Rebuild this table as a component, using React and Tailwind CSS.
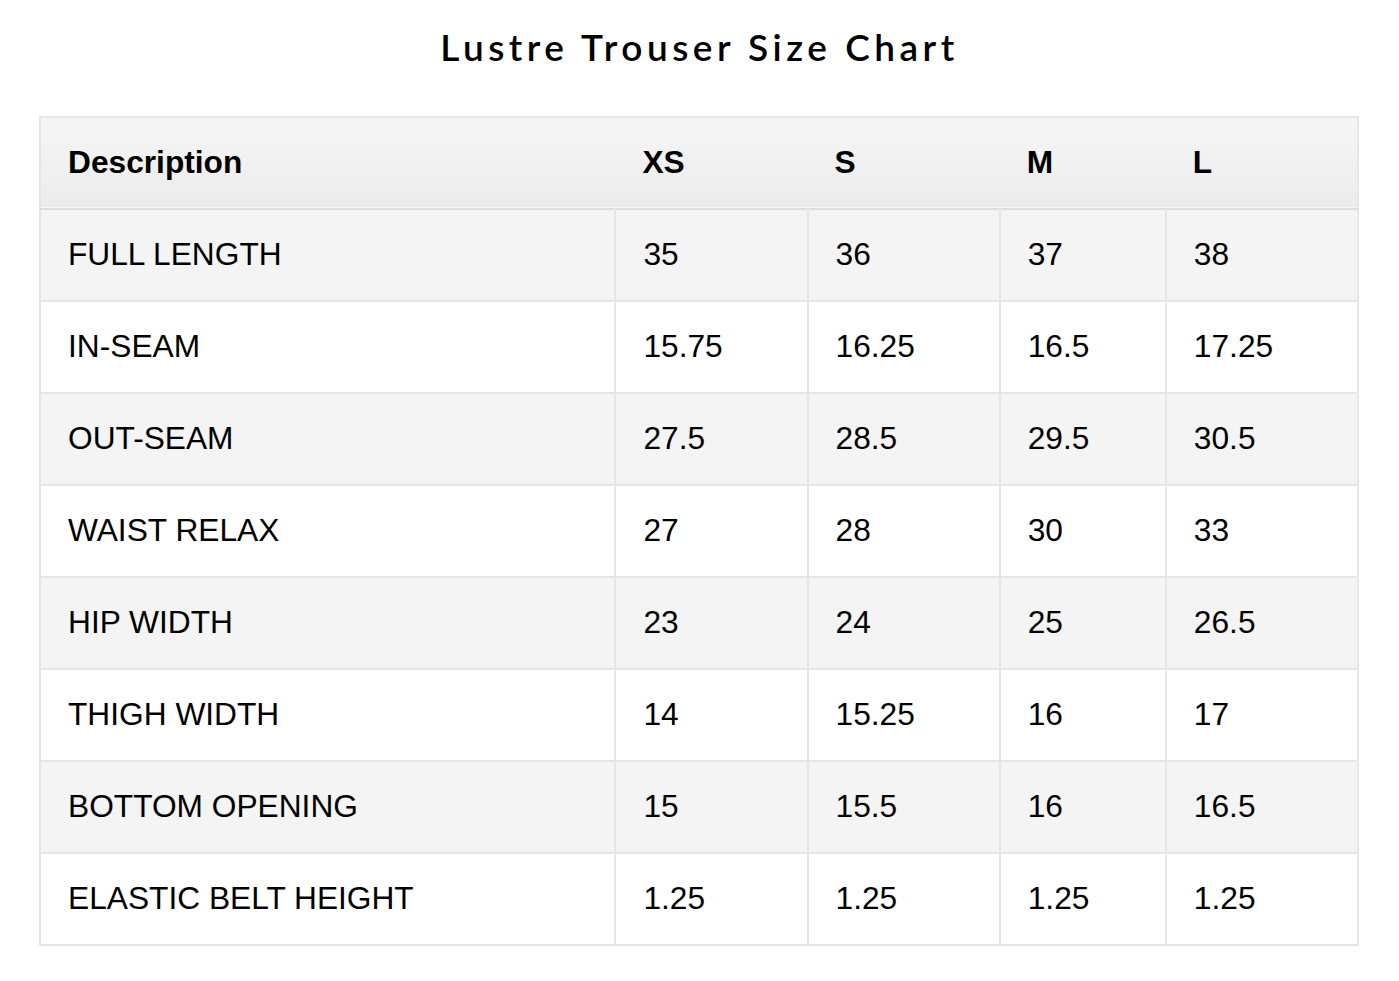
import React from "react";

const sizes = ["XS", "S", "M", "L"];

const rows = [
  { label: "FULL LENGTH", values: ["35", "36", "37", "38"] },
  { label: "IN-SEAM", values: ["15.75", "16.25", "16.5", "17.25"] },
  { label: "OUT-SEAM", values: ["27.5", "28.5", "29.5", "30.5"] },
  { label: "WAIST RELAX", values: ["27", "28", "30", "33"] },
  { label: "HIP WIDTH", values: ["23", "24", "25", "26.5"] },
  { label: "THIGH WIDTH", values: ["14", "15.25", "16", "17"] },
  { label: "BOTTOM OPENING", values: ["15", "15.5", "16", "16.5"] },
  { label: "ELASTIC BELT HEIGHT", values: ["1.25", "1.25", "1.25", "1.25"] },
];

const colWidths = ["w-[575px]", "w-[192px]", "w-[192px]", "w-[166px]", "w-[192px]"];

export default function App() {
  return (
    <div className="min-h-screen bg-white pt-[26px] font-['Liberation_Sans',Arial,sans-serif] text-black">
      {/* Title */}
      <h1 className="text-center font-['Lato',sans-serif] text-[37px] font-semibold leading-[42px] tracking-[4.5px]">
        Lustre Trouser Size Chart
      </h1>

      {/* Table */}
      <div className="mt-[48px] ml-[39px] w-[1320px]">
        <table className="w-full border-collapse border-2 border-[#e6e6e6] text-[31.7px] leading-none">
          <thead>
            <tr className="h-[92px] bg-gradient-to-b from-[#f6f6f6] to-[#ececec] border-b-2 border-[#dedede]">
              <th className={`${colWidths[0]} pl-[27px] text-left font-bold`}>Description</th>
              {sizes.map((s, i) => (
                <th key={s} className={`${colWidths[i + 1]} pl-[27px] text-left font-bold`}>
                  {s}
                </th>
              ))}
            </tr>
          </thead>
          <tbody>
            {rows.map((row, idx) => (
              <tr
                key={row.label}
                className={`h-[92px] border-t-2 border-[#e6e6e6] ${
                  idx % 2 === 0 ? "bg-[#f4f4f4]" : "bg-white"
                }`}
              >
                <td className="pl-[27px] text-left">{row.label}</td>
                {row.values.map((v, i) => (
                  <td key={i} className="border-l-2 border-[#e6e6e6] pl-[27px] text-left">
                    {v}
                  </td>
                ))}
              </tr>
            ))}
          </tbody>
        </table>
      </div>
    </div>
  );
}
